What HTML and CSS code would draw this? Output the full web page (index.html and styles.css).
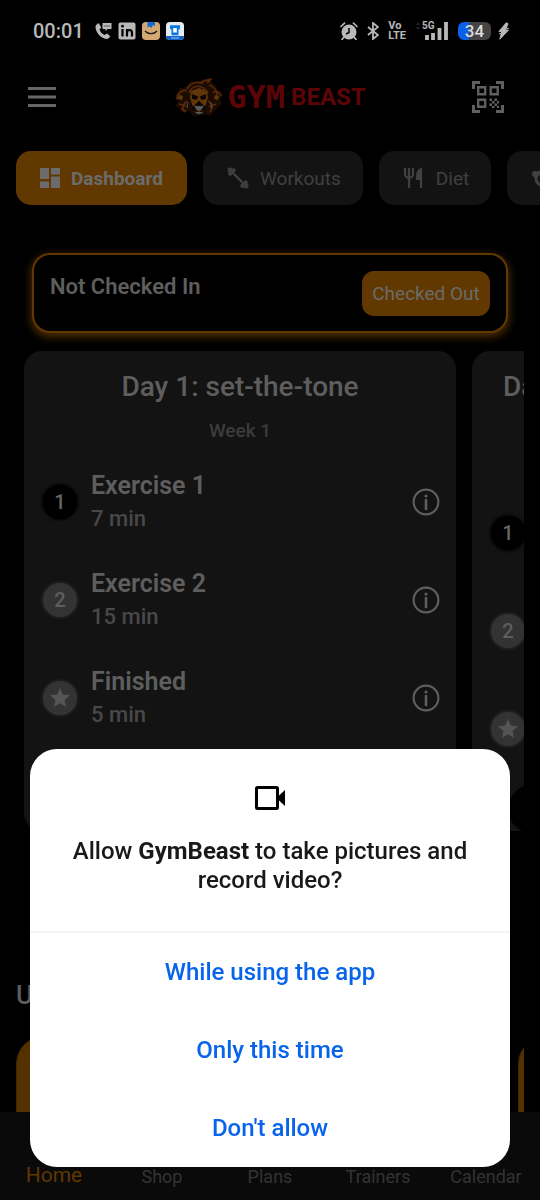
FILE: index.html
```html
<!DOCTYPE html>
<html lang="en">
<head>
<meta charset="utf-8">
<meta name="viewport" content="width=device-width, initial-scale=1">
<title>GymBeast</title>
<link rel="stylesheet" href="styles.css">
</head>
<body>
<svg class="sprite" aria-hidden="true">
  <symbol id="info" viewBox="0 0 28 28"><circle cx="14" cy="14" r="12.4" fill="none" stroke="currentColor" stroke-width="2.2"/><circle cx="14" cy="8" r="1.6" fill="currentColor"/><path d="M14 12v9" stroke="currentColor" stroke-width="2.6" stroke-linecap="round"/></symbol>
  <symbol id="star" viewBox="0 0 24 24"><path fill="currentColor" d="M12 17.3 18.2 21l-1.7-7L22 9.2l-7.2-.6L12 2 9.200 8.600 2 9.200 7.500 14 5.800 21z"/></symbol>
</svg>
<div class="app">
  <div class="status">
    <div class="status-side">
      <span class="time">00:01</span>
      <svg class="s-icon" viewBox="0 0 18 18"><path d="M3.500 1.500 1.500 4C1 10 7 17 13.500 17L16.500 14.500 13 11.500 10.500 13C8 12 6 9.500 5.500 7.500L7.200 5.500 5 1.500z" fill="#b9b9b9"/><path d="M8.500 1h9v6h-4l-2 2.200V7h-3z" fill="#b9b9b9"/><path d="M10.500 4h1m1 0h1m1 0h1" stroke="#000" stroke-width="1.200"/></svg>
      <svg class="s-icon" viewBox="0 0 18 18"><rect x=".5" y=".5" width="17" height="17" rx="2" fill="#b9b9b9"/><path d="M4.500 7v7.500M9 7v7.500M9 11c0-4 5-4 5 0v3.500" fill="none" stroke="#000" stroke-width="2.200"/><circle cx="4.500" cy="4.200" r="1.400" fill="#000"/></svg>
      <svg class="s-icon" viewBox="0 0 18 18"><rect width="18" height="18" rx="4" fill="#d3a873"/><path d="M5.500 0h7.500v4l-2-1-1.500 3-2-1.500-2 1z" fill="#1769d2"/><path d="M3 9c3 3.500 9 3.500 12 0" fill="none" stroke="#1c1c1c" stroke-width="1.300"/></svg>
      <svg class="s-icon" viewBox="0 0 18 18"><rect width="18" height="18" rx="4" fill="#e4edf5"/><path d="M0 14h18c0 3-1.500 4-4 4H4c-2.500 0-4-1-4-4z" fill="#1262cd"/><path d="M4 3.200h10v4h-1.500v6h-7v-6H4z" fill="#0c78df"/><path d="M7.200 6h3.600v4.500H7.200z" fill="#fff"/><path d="M5 16h8" stroke="#9cc7f5"/></svg>
    </div>
    <div class="status-side">
      <svg class="s-icon" viewBox="0 0 18 18"><circle cx="9" cy="10" r="7.500" fill="#b9b9b9"/><path d="M1 4.500 4.500 1.200M17 4.500l-3.500-3.300M4 15l-2 2.500M14 15l2 2.500" stroke="#b9b9b9" stroke-width="1.700" stroke-linecap="round"/><path d="M9 6v4.500l-3 1.500" fill="none" stroke="#000" stroke-width="1.500"/></svg>
      <svg class="bt" viewBox="0 0 12 18"><path d="m1 5 10 8-5 4V1l5 4-10 8" fill="none" stroke="#b9b9b9" stroke-width="1.800"/></svg>
      <span class="volte">Vo<br>LTE</span>
      <svg class="signal" viewBox="0 0 34 20"><text x="7" y="8" class="five-g">5G</text><path d="M12 14v5M18 12v7M24.500 7v12M31 1v18" stroke="#b9b9b9" stroke-width="3.800"/><path d="m1 4 2-3 2 3zm0 2 2 3 2-3z" fill="#242424"/></svg>
      <span class="battery">34</span>
      <svg class="bolt" viewBox="0 0 12 18"><path d="M9 0 1 9.500h3L2 18l9.500-10H8.200L11 1zM1 12l5-1M6 7l6-1" fill="#b9b9b9" stroke="#b9b9b9"/></svg>
    </div>
  </div>

  <header class="header">
    <button class="icon-btn" aria-label="Menu"><svg width="28" height="20" viewBox="0 0 28 20"><path d="M0 1.500h28M0 10h28M0 18.500h28" stroke="#666" stroke-width="3"/></svg></button>
    <div class="logo">
      <svg width="50" height="38" viewBox="0 0 50 38">
        <path d="M1 18 6 10l6-1 5-6 7 1 6-3 9-1-2 3 5 5 1 4 6 4-3 5 2 5-6 5-6 7-4-2-3 1-10 1-4-5-6 2-3-5-5-2 3-4z" fill="#1c0b03"/>
        <path d="M3 19c3-6 6-8 10-6M2 21l6-3m-3 8 7 2m1-17c4-7 11-8 16-5M15 15c4-9 13-9 19 0m1-8c6 2 9 7 8 13m4-2c-2-5-6-6-8-3m-26 8c-4 3-6 8-2 11m23-11c4 2 5 7 2 11M27 4 37 1l-4 4M7 31l5 2m30-7-7 3" fill="none" stroke="#5a2a07" stroke-width="1.700"/>
        <path d="m17 13 8-3 8 3 1 7-3 9-6 5-6-5-3-9z" fill="#5f3709"/><path d="m18 17 5 2-1 2-4-1m14-3-5 2 1 2 4-1M22 27l3 1 3-1-3-3zM19 28l2 4m10-4-2 4" stroke="#090402" stroke-width="1.800" fill="#130701"/>
        <path d="m21 29 3-1 1 1 1-1 3 1-3 3h-2zM14 24l-1 6m24-6 1 6M21 34l4 2 4-2" fill="#555d61" stroke="#4a555c"/>
        <path d="m5 17 4 1-1 4-4-1m37-4 4 1-1 4-4-1" fill="#5f3709"/>
      </svg>
      <span class="gym">GYM</span><span class="beast">BEAST</span>
    </div>
    <button class="icon-btn" aria-label="Scan code"><svg width="32" height="32" viewBox="0 0 32 32"><g fill="none" stroke="#606060"><path d="M1.500 8V1.500H8M24 1.500h6.500V8M30.500 24v6.500H24M8 30.500H1.500V24" stroke-width="3"/><path d="M6.200 6.200h7v7h-7zM18.700 6.200h7v7h-7zM6.200 18.700h7v7h-7z" stroke-width="2.400"/></g><path d="M17.500 17.500H20V20h-2.500zm5 0H25V20h-2.500zM20 20h2.500v2.500H20zm5 0h2v2.500h-2zm-7.500 2.500H20V25h-2.500zm5 0H25V25h-2.500zM20 25h2.500v2H20zm5 0h2v2h-2z" fill="#606060"/></svg></button>
  </header>

  <nav class="tabs" aria-label="Sections">
    <button class="tab active"><svg width="20" height="20" viewBox="0 0 20 20"><path d="M0 0h9v11H0zM11 0h9v6.500h-9zM0 13.500h9V20H0zM11 8.500h9V20h-9z" fill="currentColor"/></svg>Dashboard</button>
    <button class="tab"><svg width="22" height="22" viewBox="0 0 22 22"><path d="m5 5 12 12" stroke="currentColor" stroke-width="2.400"/><path d="m2 8 6-6M14 20l6-6" stroke="currentColor" stroke-width="3.400"/><path d="m1 5 4-4M17 21l4-4M1 1l3 3m14 14 3 3" stroke="currentColor" stroke-width="2"/></svg>Workouts</button>
    <button class="tab"><svg width="22" height="22" viewBox="0 0 22 22"><path d="M2 1v6c0 5 8 5 8 0V1M6 1v20M18 21V2c-3 1-4 4-4 10h4" fill="none" stroke="currentColor" stroke-width="2.200"/><path d="M15 3h3v9h-3z" fill="currentColor"/></svg>Diet</button>
    <button class="tab" aria-label="More"><svg width="22" height="22" viewBox="0 0 22 22"><circle cx="4" cy="7" r="3" fill="currentColor"/><circle cx="11" cy="12" r="6" fill="none" stroke="currentColor" stroke-width="3"/><path d="m3 8 5 9M6 5h8M9 11h5" stroke="currentColor" stroke-width="2"/></svg></button>
  </nav>

  <main class="content">
    <section class="checkin">
      <h2>Not Checked In</h2>
      <button>Checked Out</button>
    </section>

    <section class="carousel">
      <article class="card">
        <h3>Day 1: set-the-tone</h3>
        <p class="week">Week 1</p>
        <ul>
          <li><span class="dot first">1</span><div class="what"><b>Exercise 1</b><span>7 min</span></div><button class="info" aria-label="About Exercise 1"><svg><use href="#info"/></svg></button></li>
          <li><span class="dot">2</span><div class="what"><b>Exercise 2</b><span>15 min</span></div><button class="info" aria-label="About Exercise 2"><svg><use href="#info"/></svg></button></li>
          <li><span class="dot"><svg><use href="#star"/></svg></span><div class="what"><b>Finished</b><span>5 min</span></div><button class="info" aria-label="About Finished"><svg><use href="#info"/></svg></button></li>
        </ul>
      </article>
      <article class="card next">
        <h3>Day 2</h3>
        <ul>
          <li><span class="dot first">1</span></li>
          <li><span class="dot">2</span></li>
          <li><span class="dot"><svg><use href="#star"/></svg></span></li>
        </ul>
      </article>
      <span class="arrow"></span>
    </section>

    <h2 class="section-title">U</h2>
    <section class="promos"><div class="promo"></div><div class="promo"></div></section>
  </main>

  <nav class="bottom" aria-label="Main">
    <a class="current" href="#home">Home</a><a href="#shop">Shop</a><a href="#plans">Plans</a><a href="#trainers">Trainers</a><a href="#calendar">Calendar</a>
  </nav>
</div>

<div class="dialog" role="dialog" aria-modal="true" aria-labelledby="ask">
  <div class="ask">
    <svg width="32" height="26" viewBox="0 0 32 26"><rect x="2.500" y="2.500" width="21" height="21" rx="1" fill="none" stroke="#000" stroke-width="3"/><path d="M24 11.500 31 5v16l-7-6.500z" fill="#000"/></svg>
    <p id="ask">Allow <b>GymBeast</b> to take pictures and record video?</p>
  </div>
  <div class="choices">
    <button>While using the app</button>
    <button>Only this time</button>
    <button>Don't allow</button>
  </div>
</div>
</body>
</html>
```

FILE: styles.css
```css
* { box-sizing: border-box; }
body { margin: 0; background: #000; color: #5e5e5e; font-family: Roboto, "Liberation Sans", sans-serif; }
button { border: 0; padding: 0; background: none; color: inherit; font: inherit; }
h2, h3, p, ul { margin: 0; padding: 0; }
.sprite { display: none; }
.app { display: flex; flex-direction: column; height: 100vh; overflow: hidden; }

.status { flex: none; display: flex; justify-content: space-between; align-items: center; height: 62px; padding: 0 31px 0 33px; color: #b9b9b9; }
.status-side { display: flex; align-items: center; gap: 6px; }
.time { margin-right: 4px; font-size: 20px; font-weight: 500; }
.s-icon { width: 18px; height: 18px; }
.status-side:last-child { gap: 9px; }
.bt { width: 12px; height: 18px; }
.volte { font-size: 11px; line-height: 10px; font-weight: 700; }
.signal { width: 34px; height: 20px; }
.five-g { font-size: 10px; font-weight: 700; fill: #b9b9b9; }
.battery { width: 33px; height: 18px; margin-right: -2px; border-radius: 6px; background: linear-gradient(90deg, #0b5fe8 34%, #444 34%); color: #ddd; font-size: 17px; line-height: 18px; font-weight: 500; text-align: center; }
.bolt { width: 11px; height: 18px; }

.header { flex: none; display: flex; justify-content: space-between; align-items: center; height: 70px; padding: 0 36px 0 28px; }
.icon-btn { display: flex; }
.logo { display: flex; align-items: center; gap: 3px; margin-left: 12px; color: #5c0508; font-weight: 700; line-height: 38px; }
.gym { margin-right: 3px; font-family: "DejaVu Sans Mono", monospace; font-size: 32px; }
.beast { font-size: 24px; }

.tabs { flex: none; display: flex; gap: 16px; margin-top: 19px; padding-left: 16px; overflow: hidden; }
.tab { flex: none; display: flex; align-items: center; gap: 11px; height: 54px; padding: 0 22px 0 24px; border-radius: 15px; background: #131313; color: #404040; font-size: 19px; }
.tab.active { padding-right: 24px; background: #613800; color: #6b6b6b; font-weight: 700; }

.content { flex: 1; min-height: 0; padding: 48px 16px 0; overflow: hidden; }
.checkin { display: flex; align-items: flex-start; justify-content: space-between; margin: 0 16px; height: 80px; padding: 16px; border: 2px solid #613800; border-radius: 18px; background: #000; box-shadow: 0 3px 9px 1px #4e2d00; }
.checkin h2 { padding-top: 3px; font-size: 22px; line-height: 26px; font-weight: 600; }
.checkin button { width: 128px; height: 45px; border-radius: 12px; background: #613800; color: #6b6b6b; font-size: 19px; }

.carousel { position: relative; display: flex; gap: 16px; margin-top: 18px; padding-left: 8px; height: 480px; overflow: hidden; }
.card { flex: none; width: calc(100% - 68px); padding: 18px 16px; border-radius: 18px; background: #131313; }
.card h3 { font-size: 28px; line-height: 36px; font-weight: 500; text-align: center; }
.week { margin-top: 14px; color: #3c3c3c; font-size: 19px; line-height: 24px; font-weight: 500; text-align: center; }
.card ul { margin-top: 10px; list-style: none; }
.card li { display: flex; align-items: center; gap: 14px; height: 98px; padding: 0 0 0 3px; }
.dot { flex: none; display: flex; align-items: center; justify-content: center; width: 34px; height: 34px; border-radius: 50%; background: #333; box-shadow: 0 0 3px 1px #282828; font-size: 20px; font-weight: 500; }
.dot.first { background: #000; color: #666; box-shadow: 0 0 3px 1px #000; }
.dot svg { width: 24px; height: 24px; color: #555; }
.what { flex: 1; display: grid; gap: 3px; }
.what b { font-size: 25px; line-height: 30px; font-weight: 600; }
.what span { color: #484848; font-size: 22px; line-height: 30px; font-weight: 500; }
.info svg { display: block; width: 28px; height: 28px; }
.next h3 { padding: 0 0 69px 15px; text-align: left; }
.arrow { position: absolute; top: 434px; right: -32px; width: 48px; height: 48px; border-radius: 50%; background: #000; }

.section-title { margin-top: 147px; font-size: 26px; line-height: 34px; font-weight: 500; }
.promos { display: flex; gap: 16px; margin-top: 24px; overflow: hidden; }
.promo { flex: none; width: calc(100% - 22px); height: 180px; border: 1px solid #3d2906; border-radius: 28px; background: linear-gradient(90deg, #553100, #3d2300); }

.bottom { flex: none; display: grid; grid-template-columns: repeat(5, 1fr); align-items: end; height: 88px; padding-bottom: 12px; background: #0a0a0a; }
.bottom a { color: #333; font-size: 18px; line-height: 22px; text-align: center; text-decoration: none; }
.bottom .current { color: #613800; font-size: 21px; line-height: 26px; }

.dialog { position: fixed; right: 30px; bottom: 33px; left: 30px; border-radius: 27px; background: #fff; color: #191919; font-size: 24px; line-height: 29px; text-align: center; }
.ask { padding: 36px 30px; border-bottom: 2px solid #f3f3f3; font-weight: 500; }
.ask svg { display: block; margin: 0 auto 26px; }
.choices { display: grid; color: #0864ec; font-weight: 500; }
.choices button { height: 78px; }
```
